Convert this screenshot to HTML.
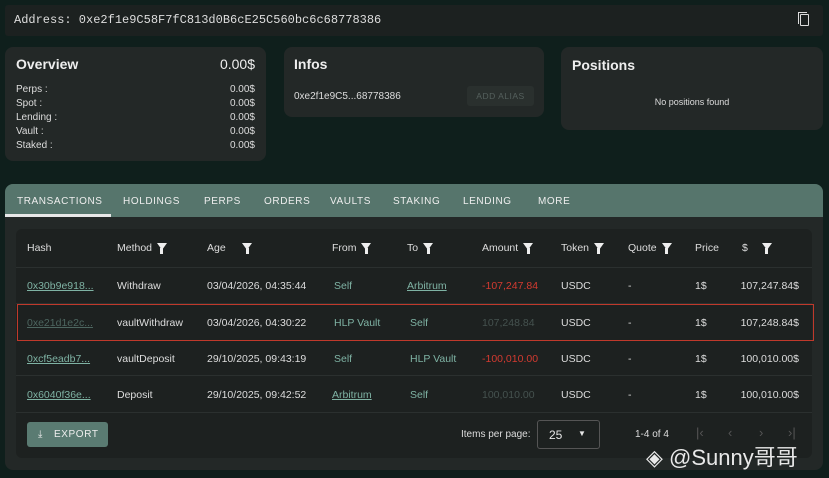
<!DOCTYPE html><html><head><meta charset="utf-8"><style>
*{box-sizing:border-box;margin:0;padding:0}
body{width:829px;height:478px;background:#0f1f1c;font-family:"Liberation Sans",sans-serif;color:#e6e6e6;position:relative;overflow:hidden;font-size:10px}
.abs{position:absolute}
.card{position:absolute;background:#232827;border-radius:8px}
.addr{left:5px;top:5px;width:818px;height:31px;background:#1c2120;border-radius:3px}
.addr span{position:absolute;left:9px;top:8px;font-family:"Liberation Mono",monospace;font-size:12px;color:#ddd}
h3{font-size:14px;font-weight:bold;color:#eee;position:absolute}
.r{position:absolute;font-size:10px;color:#ddd}
.tabs{left:5px;top:184px;width:818px;height:286px;background:#232827;border-radius:8px;overflow:hidden}
.tabbar{height:33px;background:#56756c;position:relative}
.tab{position:absolute;top:12px;font-size:10px;letter-spacing:.6px;color:#eee}
.inner{position:absolute;left:11px;top:45px;width:796px;height:229px;background:#1d2120;border-radius:6px}
.cell{position:absolute;font-size:10.5px;color:#ddd;white-space:nowrap}
.g{color:#7fb3a4}.u{text-decoration:underline}.red{color:#d33a30}.dim{color:#45524f}
.line{position:absolute;left:0;width:796px;height:1px;background:#2b302f}
.f{display:inline-block;width:0;height:0;border-left:5px solid transparent;border-right:5px solid transparent;border-top:7px solid #eee;position:relative;top:-1px;margin-left:2px}
.f:after{content:"";position:absolute;left:-1.5px;top:-2px;width:3px;height:6px;background:#eee}
.pg{position:absolute;top:196px;color:#555;font-size:13px}
</style></head><body>
<div class="abs addr"><span>Address: 0xe2f1e9C58F7fC813d0B6cE25C560bc6c68778386</span>
<div class="abs" style="left:795px;top:9px;width:9px;height:12px;border:1.5px solid #ddd;border-radius:1px"></div>
<div class="abs" style="left:793px;top:7px;width:9px;height:12px;border-left:1.5px solid #ddd;border-top:1.5px solid #ddd"></div></div>

<div class="card" style="left:5px;top:47px;width:261px;height:114px">
<h3 style="left:11px;top:9px">Overview</h3><h3 style="right:11px;top:9px;font-weight:normal">0.00$</h3>
<div class="r" style="left:11px;top:36px;line-height:14px">Perps :<br>Spot :<br>Lending :<br>Vault :<br>Staked :</div>
<div class="r" style="right:11px;top:36px;line-height:14px;text-align:right">0.00$<br>0.00$<br>0.00$<br>0.00$<br>0.00$</div></div>

<div class="card" style="left:284px;top:47px;width:260px;height:70px">
<h3 style="left:10px;top:9px">Infos</h3>
<div class="r" style="left:10px;top:44px">0xe2f1e9C5...68778386</div>
<div class="abs" style="left:183px;top:39px;width:67px;height:20px;background:#2a302e;border-radius:3px;color:#55605d;font-size:8.5px;text-align:center;line-height:20px;letter-spacing:.5px">ADD ALIAS</div></div>

<div class="card" style="left:561px;top:47px;width:262px;height:83px">
<h3 style="left:11px;top:10px">Positions</h3>
<div class="r" style="left:0;width:100%;text-align:center;top:50px;font-size:9px">No positions found</div></div>

<div class="abs tabs"><div class="tabbar">
<span class="tab" style="left:12px">TRANSACTIONS</span><span class="tab" style="left:118px">HOLDINGS</span><span class="tab" style="left:199px">PERPS</span><span class="tab" style="left:259px">ORDERS</span><span class="tab" style="left:325px">VAULTS</span><span class="tab" style="left:388px">STAKING</span><span class="tab" style="left:458px">LENDING</span><span class="tab" style="left:533px">MORE</span>
<div class="abs" style="left:0;top:30px;width:106px;height:3px;background:#e8e8e8"></div></div>
<div class="inner">
<div class="cell" style="left:11px;top:13px">Hash</div>
<div class="cell" style="left:101px;top:13px">Method <i class="f"></i></div>
<div class="cell" style="left:191px;top:13px">Age &nbsp;&nbsp;&nbsp;&nbsp;<i class="f"></i></div>
<div class="cell" style="left:316px;top:13px">From <i class="f"></i></div>
<div class="cell" style="left:391px;top:13px">To <i class="f"></i></div>
<div class="cell" style="left:466px;top:13px">Amount <i class="f"></i></div>
<div class="cell" style="left:545px;top:13px">Token <i class="f"></i></div>
<div class="cell" style="left:612px;top:13px">Quote <i class="f"></i></div>
<div class="cell" style="left:679px;top:13px">Price</div>
<div class="cell" style="left:726px;top:13px">$ &nbsp;&nbsp;&nbsp;<i class="f"></i></div>
<div class="line" style="top:38px"></div>

<div class="cell g u" style="left:11px;top:51px">0x30b9e918...</div><div class="cell" style="left:101px;top:51px">Withdraw</div><div class="cell" style="left:191px;top:51px">03/04/2026, 04:35:44</div><div class="cell g" style="left:318px;top:51px">Self</div><div class="cell g u" style="left:391px;top:51px">Arbitrum</div><div class="cell red" style="left:466px;top:51px">-107,247.84</div><div class="cell" style="left:545px;top:51px">USDC</div><div class="cell" style="left:612px;top:51px">-</div><div class="cell" style="left:679px;top:51px">1$</div><div class="cell" style="right:13px;top:51px">107,247.84$</div>
<div class="line" style="top:74px"></div>

<div class="abs" style="left:1px;top:75px;width:797px;height:37px;border:1.5px solid #c0392b"></div>
<div class="cell dim u" style="left:11px;top:88px;color:#4d6660">0xe21d1e2c...</div><div class="cell" style="left:101px;top:88px">vaultWithdraw</div><div class="cell" style="left:191px;top:88px">03/04/2026, 04:30:22</div><div class="cell g" style="left:318px;top:88px">HLP Vault</div><div class="cell g" style="left:394px;top:88px">Self</div><div class="cell dim" style="left:466px;top:88px">107,248.84</div><div class="cell" style="left:545px;top:88px">USDC</div><div class="cell" style="left:612px;top:88px">-</div><div class="cell" style="left:679px;top:88px">1$</div><div class="cell" style="right:13px;top:88px">107,248.84$</div>

<div class="cell g u" style="left:11px;top:124px">0xcf5eadb7...</div><div class="cell" style="left:101px;top:124px">vaultDeposit</div><div class="cell" style="left:191px;top:124px">29/10/2025, 09:43:19</div><div class="cell g" style="left:318px;top:124px">Self</div><div class="cell g" style="left:394px;top:124px">HLP Vault</div><div class="cell red" style="left:466px;top:124px">-100,010.00</div><div class="cell" style="left:545px;top:124px">USDC</div><div class="cell" style="left:612px;top:124px">-</div><div class="cell" style="left:679px;top:124px">1$</div><div class="cell" style="right:13px;top:124px">100,010.00$</div>
<div class="line" style="top:146px"></div>

<div class="cell g u" style="left:11px;top:160px">0x6040f36e...</div><div class="cell" style="left:101px;top:160px">Deposit</div><div class="cell" style="left:191px;top:160px">29/10/2025, 09:42:52</div><div class="cell g u" style="left:316px;top:160px">Arbitrum</div><div class="cell g" style="left:394px;top:160px">Self</div><div class="cell dim" style="left:466px;top:160px">100,010.00</div><div class="cell" style="left:545px;top:160px">USDC</div><div class="cell" style="left:612px;top:160px">-</div><div class="cell" style="left:679px;top:160px">1$</div><div class="cell" style="right:13px;top:160px">100,010.00$</div>
<div class="line" style="top:183px"></div>

<div class="abs" style="left:11px;top:193px;width:81px;height:25px;background:#5a7b72;border-radius:3px;font-size:10px;letter-spacing:.6px;line-height:25px;color:#eee"><span style="position:absolute;left:11px">⤓</span><span style="position:absolute;left:27px">EXPORT</span></div>
<div class="cell" style="left:445px;top:200px;font-size:10px">Items per page:</div>
<div class="abs" style="left:521px;top:191px;width:63px;height:29px;border:1px solid #555;border-radius:3px;font-size:12px"><span style="position:absolute;left:11px;top:7px">25</span><span style="position:absolute;left:40px;top:8px;font-size:8px">▼</span></div>
<div class="cell" style="left:619px;top:200px;font-size:10px">1-4 of 4</div>
<span class="pg" style="left:680px">|‹</span><span class="pg" style="left:712px">‹</span><span class="pg" style="left:743px">›</span><span class="pg" style="left:772px">›|</span>
</div></div>
<div class="abs" style="left:646px;top:440px;font-size:22px;color:#e8e8e8;font-family:'Liberation Sans','Noto Sans CJK SC',sans-serif">◈ @Sunny哥哥</div>
</body></html>
